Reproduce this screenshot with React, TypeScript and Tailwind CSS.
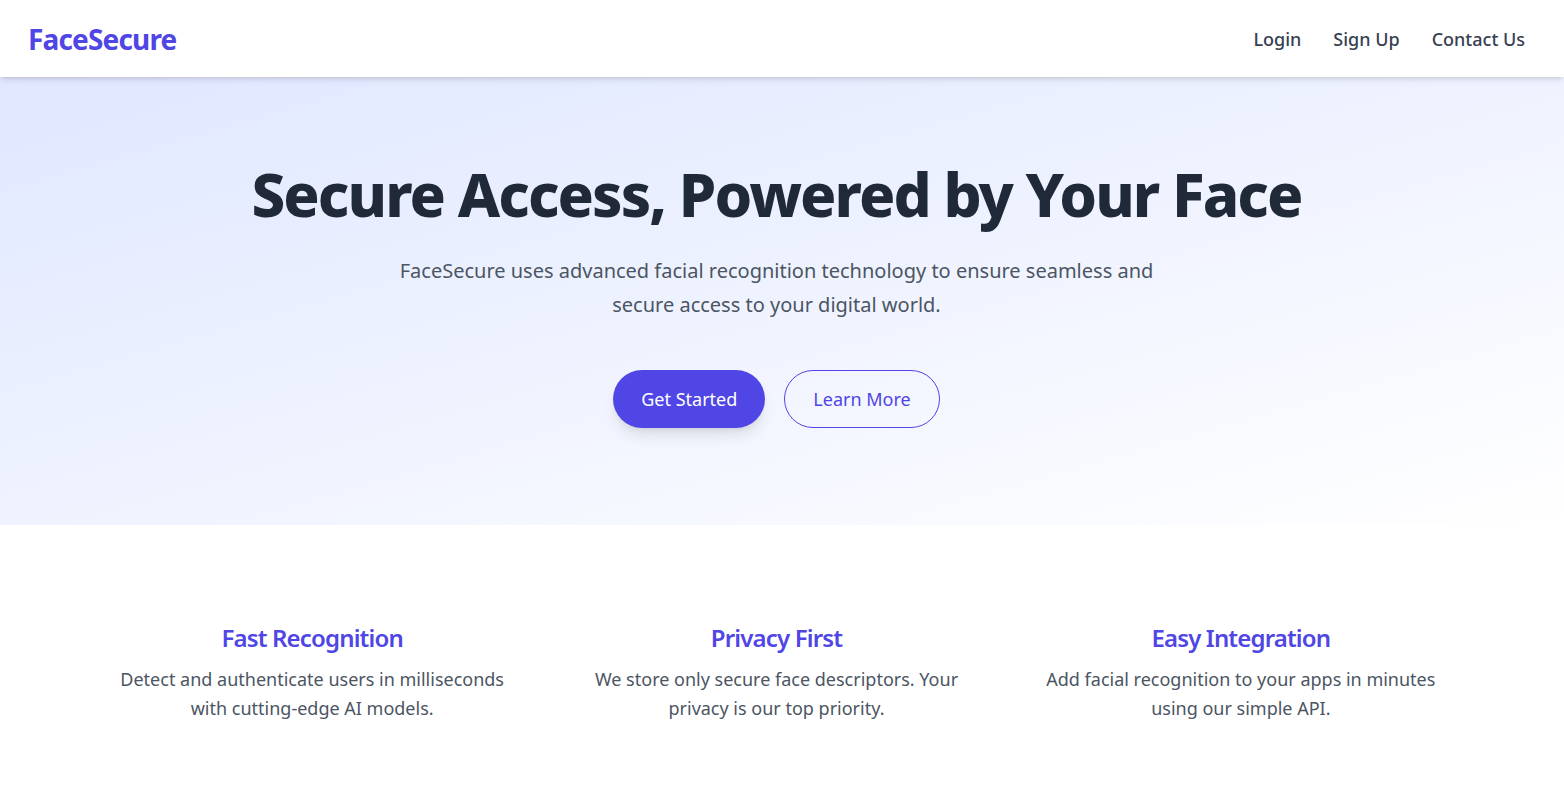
import React from "react";

const font = { fontFamily: '"Noto Sans", "Open Sans", sans-serif' };

export default function App() {
  const features = [
    { t: "Fast Recognition", d: "Detect and authenticate users in milliseconds with cutting-edge AI models." },
    { t: "Privacy First", d: "We store only secure face descriptors. Your privacy is our top priority." },
    { t: "Easy Integration", d: "Add facial recognition to your apps in minutes using our simple API." },
  ];
  return (
    <div className="min-h-screen bg-white font-['Noto_Sans','Open_Sans',sans-serif]" style={font}>
      <nav className="relative z-10 flex h-[77px] items-center justify-between bg-white pl-7 pr-[39px] shadow-md">
        <div className="text-[28px] font-bold tracking-[-0.03em] text-[#4f46e5]">FaceSecure</div>
        <div className="flex items-center gap-8 text-lg font-medium text-[#374151]">
          <a>Login</a>
          <a>Sign Up</a>
          <a>Contact Us</a>
        </div>
      </nav>
      <section className="bg-gradient-to-br from-indigo-100 to-white pb-[97px] pl-6 pr-[35px] pt-[87px] text-center">
        <h1 className="text-6xl font-extrabold leading-none tracking-[-0.032em] text-[#1f2937]">Secure Access, Powered by Your Face</h1>
        <p className="mx-auto mt-[30px] max-w-3xl text-xl leading-[34px] text-[#4b5563]">
          FaceSecure uses advanced facial recognition technology to ensure seamless and secure access to your digital world.
        </p>
        <div className="mt-12 flex justify-center gap-[19px]">
          <button className="h-[58px] rounded-full bg-[#4f46e5] px-7 text-lg text-white shadow-lg">Get Started</button>
          <button className="h-[58px] rounded-full border border-[#4f46e5] px-7 text-lg text-[#4f46e5]">Learn More</button>
        </div>
      </section>
      <section className="grid grid-cols-3 gap-8 pb-24 pl-24 pr-[107px] pt-[97px] text-center">
        {features.map((f) => (
          <div key={f.t} className="px-4">
            <h3 className="mb-[11px] text-2xl font-semibold tracking-[-0.035em] text-[#4f46e5]">{f.t}</h3>
            <p className="text-lg leading-relaxed text-[#4b5563]">{f.d}</p>
          </div>
        ))}
      </section>
    </div>
  );
}
